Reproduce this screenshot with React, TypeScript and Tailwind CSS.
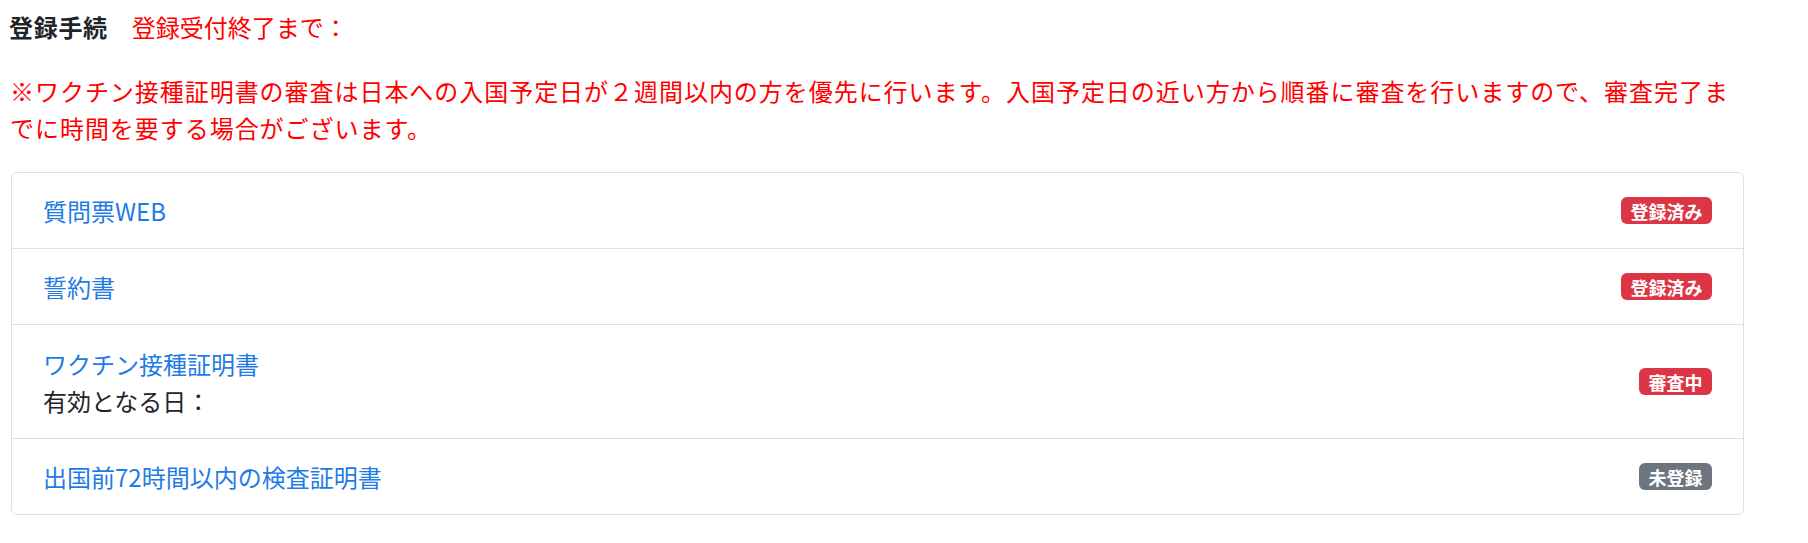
import React from 'react'

type Status = 'done' | 'review' | 'none'

const ITEMS: { title: string; sub?: string; status: Status }[] = [
  { title: '質問票WEB', status: 'done' },
  { title: '誓約書', status: 'done' },
  { title: 'ワクチン接種証明書', sub: '有効となる日：', status: 'review' },
  { title: '出国前72時間以内の検査証明書', status: 'none' },
]

const BADGE: Record<Status, { label: string; cls: string }> = {
  done: { label: '登録済み', cls: 'bg-[#dc3545]' },
  review: { label: '審査中', cls: 'bg-[#dc3545]' },
  none: { label: '未登録', cls: 'bg-[#6c757d]' },
}

function Badge({ status }: { status: Status }) {
  const b = BADGE[status]
  return (
    <span
      className={`inline-block rounded-[6px] px-[9.5px] py-[4.5px] text-[18px] font-bold leading-[18px] text-white ${b.cls}`}
    >
      {b.label}
    </span>
  )
}

export default function App() {
  return (
    <div
      className="w-[1808px] h-[543px] bg-white pl-[10px] pt-[9px] text-[#212529]"
      style={{ fontFamily: '"Noto Sans CJK JP", "Noto Sans", sans-serif' }}
    >
      {/* Header */}
      <div className="flex text-[24px] leading-[36px] mb-[27px] -ml-[1px]">
        <span className="font-bold tracking-[0.7px]">登録手続</span>
        <span className="ml-[24px] text-[#ff0000]">登録受付終了まで：</span>
      </div>

      <p className="w-[1733px] text-[24px] leading-[37px] tracking-[0.96px] text-[#ff0000] mb-[26px]">
        ※ワクチン接種証明書の審査は日本への入国予定日が２週間以内の方を優先に行います。入国予定日の近い方から順番に審査を行いますので、審査完了までに時間を要する場合がございます。
      </p>

      {/* Steps */}
      <ul className="ml-[1px] w-[1733px] rounded-[6px] border border-[#dfdfdf]">
        {ITEMS.map((item, i) => (
          <li
            key={item.title}
            className={`flex items-center justify-between pl-[31px] pr-[31px] py-[19.5px] ${
              i > 0 ? 'border-t border-[#dfdfdf]' : ''
            }`}
          >
            <div className={`text-[24px] ${item.sub ? 'leading-[37px]' : 'leading-[36px]'}`}>
              <a href="#" className="text-[#1f7ce6]">
                {item.title}
              </a>
              {item.sub && <div className="text-[#212529]">{item.sub}</div>}
            </div>
            <Badge status={item.status} />
          </li>
        ))}
      </ul>
    </div>
  )
}
